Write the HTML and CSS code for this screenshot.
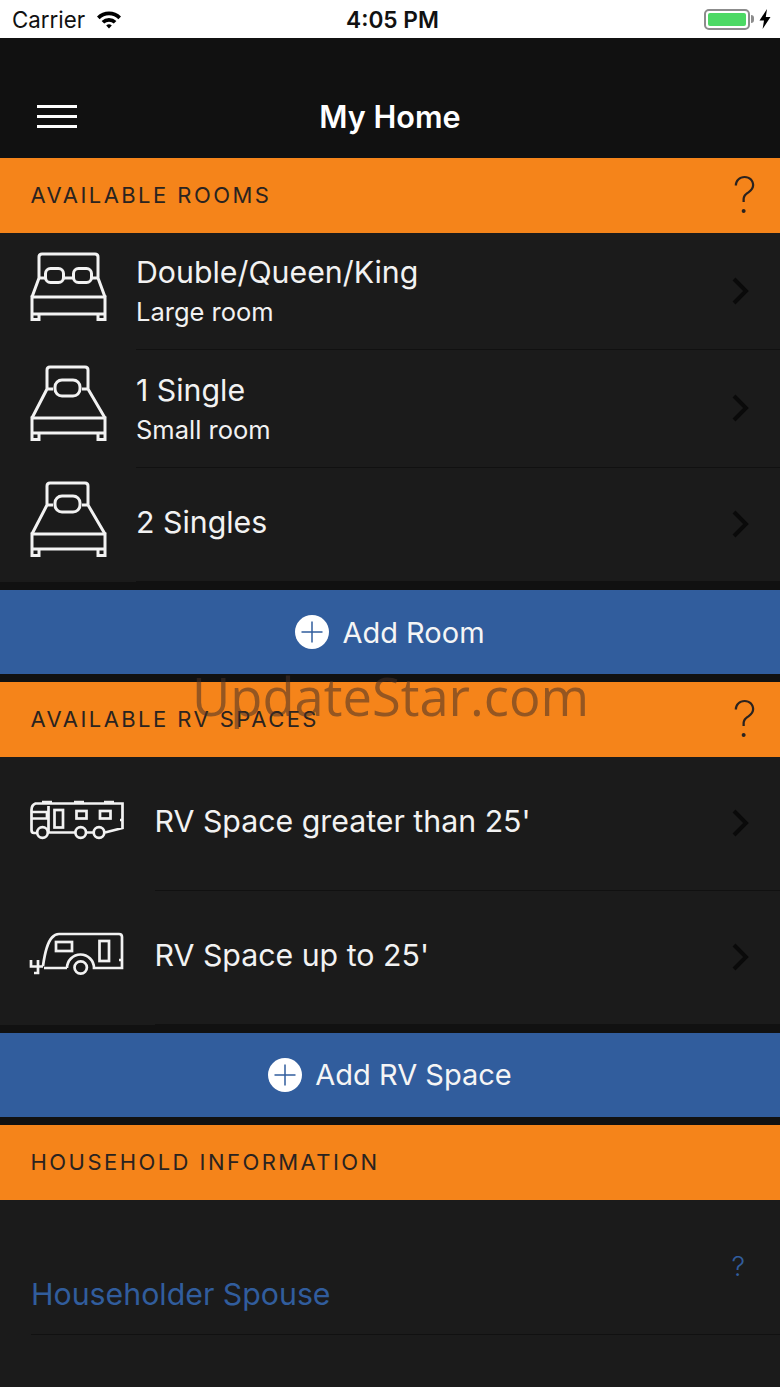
FILE: index.html
```html
<!DOCTYPE html>
<html lang="en">
<head>
    <meta charset="UTF-8">
    <meta name="viewport" content="width=device-width, initial-scale=1.0">
    <title>My Home</title>
    <link rel="stylesheet" href="styles.css">
</head>
<body>
    <div class="status-bar">
        <div class="status-left">
            <span class="carrier">Carrier</span>
            <svg class="wifi" width="26" height="19" viewBox="0 0 26 19">
                <path d="M1 6.5 A17 17 0 0 1 25 6.5 L22.4 9.2 A13.4 13.4 0 0 0 3.6 9.2 Z" />
                <path d="M5.6 11 A10.6 10.6 0 0 1 20.4 11 L17.8 13.6 A7 7 0 0 0 8.2 13.6 Z" />
                <path d="M10.2 15.5 A4 4 0 0 1 15.8 15.5 L13 18.6 Z" />
            </svg>
        </div>
        <span class="clock">4:05 PM</span>
        <div class="status-right">
            <div class="battery"><div class="battery-fill"></div></div>
            <div class="battery-tip"></div>
            <svg class="bolt" width="12" height="20" viewBox="0 0 12 20">
                <path d="M8 0 L0.5 11.5 H5 L3.6 20 L11.5 8 H6.8 Z" />
            </svg>
        </div>
    </div>

    <header class="nav-bar">
        <div class="hamburger"><span></span><span></span><span></span></div>
        <h1>My Home</h1>
    </header>

    <section class="section-head">
        <h2>AVAILABLE ROOMS</h2>
        <span class="help">?</span>
    </section>

    <div class="list room-list">
        <div class="row">
            <svg class="row-icon bed-icon" width="78" height="70" viewBox="0 0 78 70">
                <path d="M10 27 V6 Q10 3 13 3 H66 Q69 3 69 6 V27 M10 27 L3 46 M69 27 L76 46 M34 27 H44 M10 27 H16 M63 27 H69" />
                <rect x="16.500" y="17.500" width="18" height="14" rx="5" />
                <rect x="44.500" y="17.500" width="18" height="14" rx="5" />
                <path d="M3 46 H76 V63 H3 Z M3 63 V68.500 H10 V63 M76 63 V68.500 H69 V63" />
            </svg>
            <div class="row-body">
                <div class="row-title">Double/Queen/King</div>
                <div class="row-sub">Large room</div>
                <svg class="chevron" width="18" height="28" viewBox="0 0 18 28"><path d="M3 2 L15 14 L3 26" /></svg>
            </div>
        </div>
        <div class="row">
            <svg class="row-icon bed-icon" width="78" height="77" viewBox="0 0 78 77">
                <path d="M18 24 V5 Q18 2 21 2 H56 Q59 2 59 5 V24 M18 24 H24 M53 24 H59 M18 24 L3 53 M59 24 L76 53" />
                <rect x="26" y="15" width="25" height="16" rx="7" />
                <path d="M3 53 H76 V68 H3 Z M3 68 V74.500 H10 V68 M76 68 V74.500 H69 V68" />
            </svg>
            <div class="row-body">
                <div class="row-title">1 Single</div>
                <div class="row-sub">Small room</div>
                <svg class="chevron" width="18" height="28" viewBox="0 0 18 28"><path d="M3 2 L15 14 L3 26" /></svg>
            </div>
        </div>
        <div class="row">
            <svg class="row-icon bed-icon" width="78" height="77" viewBox="0 0 78 77">
                <path d="M18 24 V5 Q18 2 21 2 H56 Q59 2 59 5 V24 M18 24 H24 M53 24 H59 M18 24 L3 53 M59 24 L76 53" />
                <rect x="26" y="15" width="25" height="16" rx="7" />
                <path d="M3 53 H76 V68 H3 Z M3 68 V74.500 H10 V68 M76 68 V74.500 H69 V68" />
            </svg>
            <div class="row-body">
                <div class="row-title">2 Singles</div>
                <svg class="chevron" width="18" height="28" viewBox="0 0 18 28"><path d="M3 2 L15 14 L3 26" /></svg>
            </div>
        </div>
    </div>

    <div class="add-button">
        <svg class="plus" width="34" height="34" viewBox="0 0 34 34"><circle cx="17" cy="17" r="17" /><path d="M6.500 17 H27.500 M17 6.500 V27.500" /></svg>
        <span>Add Room</span>
    </div>

    <section class="section-head section-gap">
        <h2>AVAILABLE RV SPACES</h2>
        <span class="help">?</span>
    </section>

    <div class="list rv-list">
        <div class="row">
            <svg class="row-icon rv-icon" width="96" height="40" viewBox="0 0 96 40">
                <path d="M8 33 H5 Q2.500 33 2.500 30 V10 Q2.500 5 6.500 3.500 H93.500 V28 L76 32.500 M19 32.500 H46 M57.500 32.500 H64.500 M3 12 H18 V18.500 H3 M19.500 6 V32 M13 2 H23 M45 2 H55 M75 2 H85 M93 20 H91" />
                <rect x="25.500" y="10" width="8.500" height="17.500" />
                <rect x="47.500" y="11" width="10" height="7.500" />
                <rect x="71" y="11" width="10.500" height="7.500" />
                <circle cx="13.500" cy="32.500" r="5.300" />
                <circle cx="51.700" cy="32.500" r="5.300" />
                <circle cx="70" cy="32.500" r="5.300" />
            </svg>
            <div class="row-body">
                <div class="row-title">RV Space greater than 25'</div>
                <svg class="chevron" width="18" height="28" viewBox="0 0 18 28"><path d="M3 2 L15 14 L3 26" /></svg>
            </div>
        </div>
        <div class="row">
            <svg class="row-icon trailer-icon" width="96" height="46" viewBox="0 0 96 46">
                <path d="M14 36 Q17 14 23 7.500 Q26 4 30 4 H90 Q93 4 93 7 V38 H70 M38 38 H15 M2 30 V36.500 H14 M9 30 V43 H5 M38 38 A13.500 13.500 0 0 1 65 38 H70 M93 30 H90" />
                <rect x="27" y="12" width="16" height="9" />
                <rect x="70.500" y="11" width="9.500" height="20" />
                <circle cx="51.700" cy="37.500" r="6.200" />
            </svg>
            <div class="row-body">
                <div class="row-title">RV Space up to 25'</div>
                <svg class="chevron" width="18" height="28" viewBox="0 0 18 28"><path d="M3 2 L15 14 L3 26" /></svg>
            </div>
        </div>
    </div>

    <div class="add-button">
        <svg class="plus" width="34" height="34" viewBox="0 0 34 34"><circle cx="17" cy="17" r="17" /><path d="M6.500 17 H27.500 M17 6.500 V27.500" /></svg>
        <span>Add RV Space</span>
    </div>

    <section class="section-head section-gap section-last">
        <h2>HOUSEHOLD INFORMATION</h2>
    </section>

    <div class="household">
        <div class="household-row">
            <span class="household-name">Householder Spouse</span>
            <span class="help-small">?</span>
        </div>
    </div>

    <div class="watermark">UpdateStar.com</div>
</body>
</html>
```

FILE: styles.css
```css
* {
    box-sizing: border-box;
}
body {
    position: relative;
    width: 780px;
    height: 1387px;
    margin: 0;
    overflow: hidden;
    background-color: #111;
    font-family: Inter, "Liberation Sans", sans-serif;
    color: #f2f2f2;
}

/* status bar */
.status-bar {
    display: flex;
    align-items: center;
    justify-content: space-between;
    height: 38px;
    padding: 0 9px 0 12px;
    background-color: #fff;
    color: #111;
}
.status-left {
    display: flex;
    align-items: center;
    gap: 11px;
    width: 180px;
}
.carrier {
    font-size: 22.300px;
    font-weight: 400;
}
.wifi {
    fill: #000;
}
.clock {
    margin-left: 2px;
    font-size: 22.700px;
    font-weight: 600;
}
.status-right {
    display: flex;
    align-items: center;
    justify-content: flex-end;
    width: 180px;
}
.battery {
    width: 46px;
    height: 21px;
    padding: 2px;
    border: 2px solid #8c8c8c;
    border-radius: 5px;
}
.battery-fill {
    height: 100%;
    background-color: #4cd964;
    border-radius: 2px;
}
.battery-tip {
    width: 3px;
    height: 8px;
    margin-left: 1px;
    background-color: #8c8c8c;
    border-radius: 0 3px 3px 0;
}
.bolt {
    margin-left: 5px;
    fill: #000;
}

/* nav */
.nav-bar {
    display: flex;
    align-items: center;
    justify-content: center;
    position: relative;
    height: 120px;
    padding-top: 37px;
    background-color: #111;
}
.nav-bar h1 {
    margin: 0;
    font-size: 30.600px;
    font-weight: 600;
    color: #fff;
}
.hamburger {
    position: absolute;
    left: 37px;
    top: 67px;
    display: flex;
    flex-direction: column;
    gap: 7px;
}
.hamburger span {
    display: block;
    width: 40px;
    height: 3px;
    background-color: #fff;
}

/* orange headers */
.section-head {
    display: flex;
    align-items: center;
    justify-content: space-between;
    height: 74.500px;
    padding: 0 23px 0 30.500px;
    background-color: #f5841a;
    color: #2a2320;
}
.section-gap {
    margin-top: 8px;
}
.section-last {
    height: 75px;
}
.section-head h2 {
    margin: 0;
    font-size: 22px;
    font-weight: 400;
    letter-spacing: 2.450px;
}
.help {
    font-size: 50px;
    font-weight: 200;
    line-height: 1;
    color: #2a2320;
}

/* rows */
.list {
    background-color: #1b1b1b;
}
.row {
    display: flex;
    align-items: center;
    padding-left: 29px;
}
.row-icon {
    flex: none;
    fill: none;
    stroke: #f2f2f2;
    stroke-width: 3;
}
.bed-icon {
    margin-bottom: 10px;
}
.rv-icon {
    margin-bottom: 8px;
    stroke-width: 2.700;
}
.trailer-icon {
    margin-bottom: 10px;
    stroke-width: 2.700;
}
.row-body {
    position: relative;
    display: flex;
    flex-direction: column;
    justify-content: center;
    flex: 1;
    align-self: stretch;
    border-bottom: 1px solid #111;
}
.room-list .row {
    height: 117.500px;
}
.room-list .row:last-child {
    height: 114.500px;
}
.room-list .row:last-child .row-body {
    padding-bottom: 4px;
}
.room-list .row-body {
    margin-left: 29px;
}
.rv-list .row {
    height: 134px;
}
.rv-list .row-body {
    margin-left: 29.500px;
    padding-bottom: 4px;
}
.row-title {
    font-size: 30.300px;
    font-weight: 400;
}
.row-sub {
    margin-top: 6px;
    font-size: 25.500px;
    font-weight: 400;
}
.chevron {
    position: absolute;
    right: 31px;
    top: 50%;
    margin-top: -14px;
    fill: none;
    stroke: #0a0a0a;
    stroke-width: 4;
}

/* blue buttons */
.add-button {
    display: flex;
    align-items: center;
    justify-content: center;
    gap: 13px;
    height: 84px;
    margin-top: 8px;
    background-color: #315d9d;
    font-size: 29px;
    color: #f5f5f5;
}
.plus circle {
    fill: #fff;
}
.plus path {
    fill: none;
    stroke: #315d9d;
    stroke-width: 1.500;
}

/* household */
.household {
    height: 187px;
    padding-left: 31px;
    background-color: #1b1b1b;
}
.household-row {
    display: flex;
    justify-content: space-between;
    height: 135px;
    padding: 52px 35px 0 0;
    border-bottom: 1px solid #111;
}
.household-name {
    align-self: flex-end;
    margin-bottom: 22px;
    font-size: 30.300px;
    color: #315d9d;
}
.help-small {
    font-size: 27px;
    font-weight: 300;
    line-height: 30px;
    color: #315d9d;
}

.watermark {
    position: absolute;
    left: 192px;
    top: 664px;
    font-family: "Open Sans", sans-serif;
    font-size: 52.500px;
    line-height: 64px;
    color: rgba(70, 50, 40, 0.55);
}
```
